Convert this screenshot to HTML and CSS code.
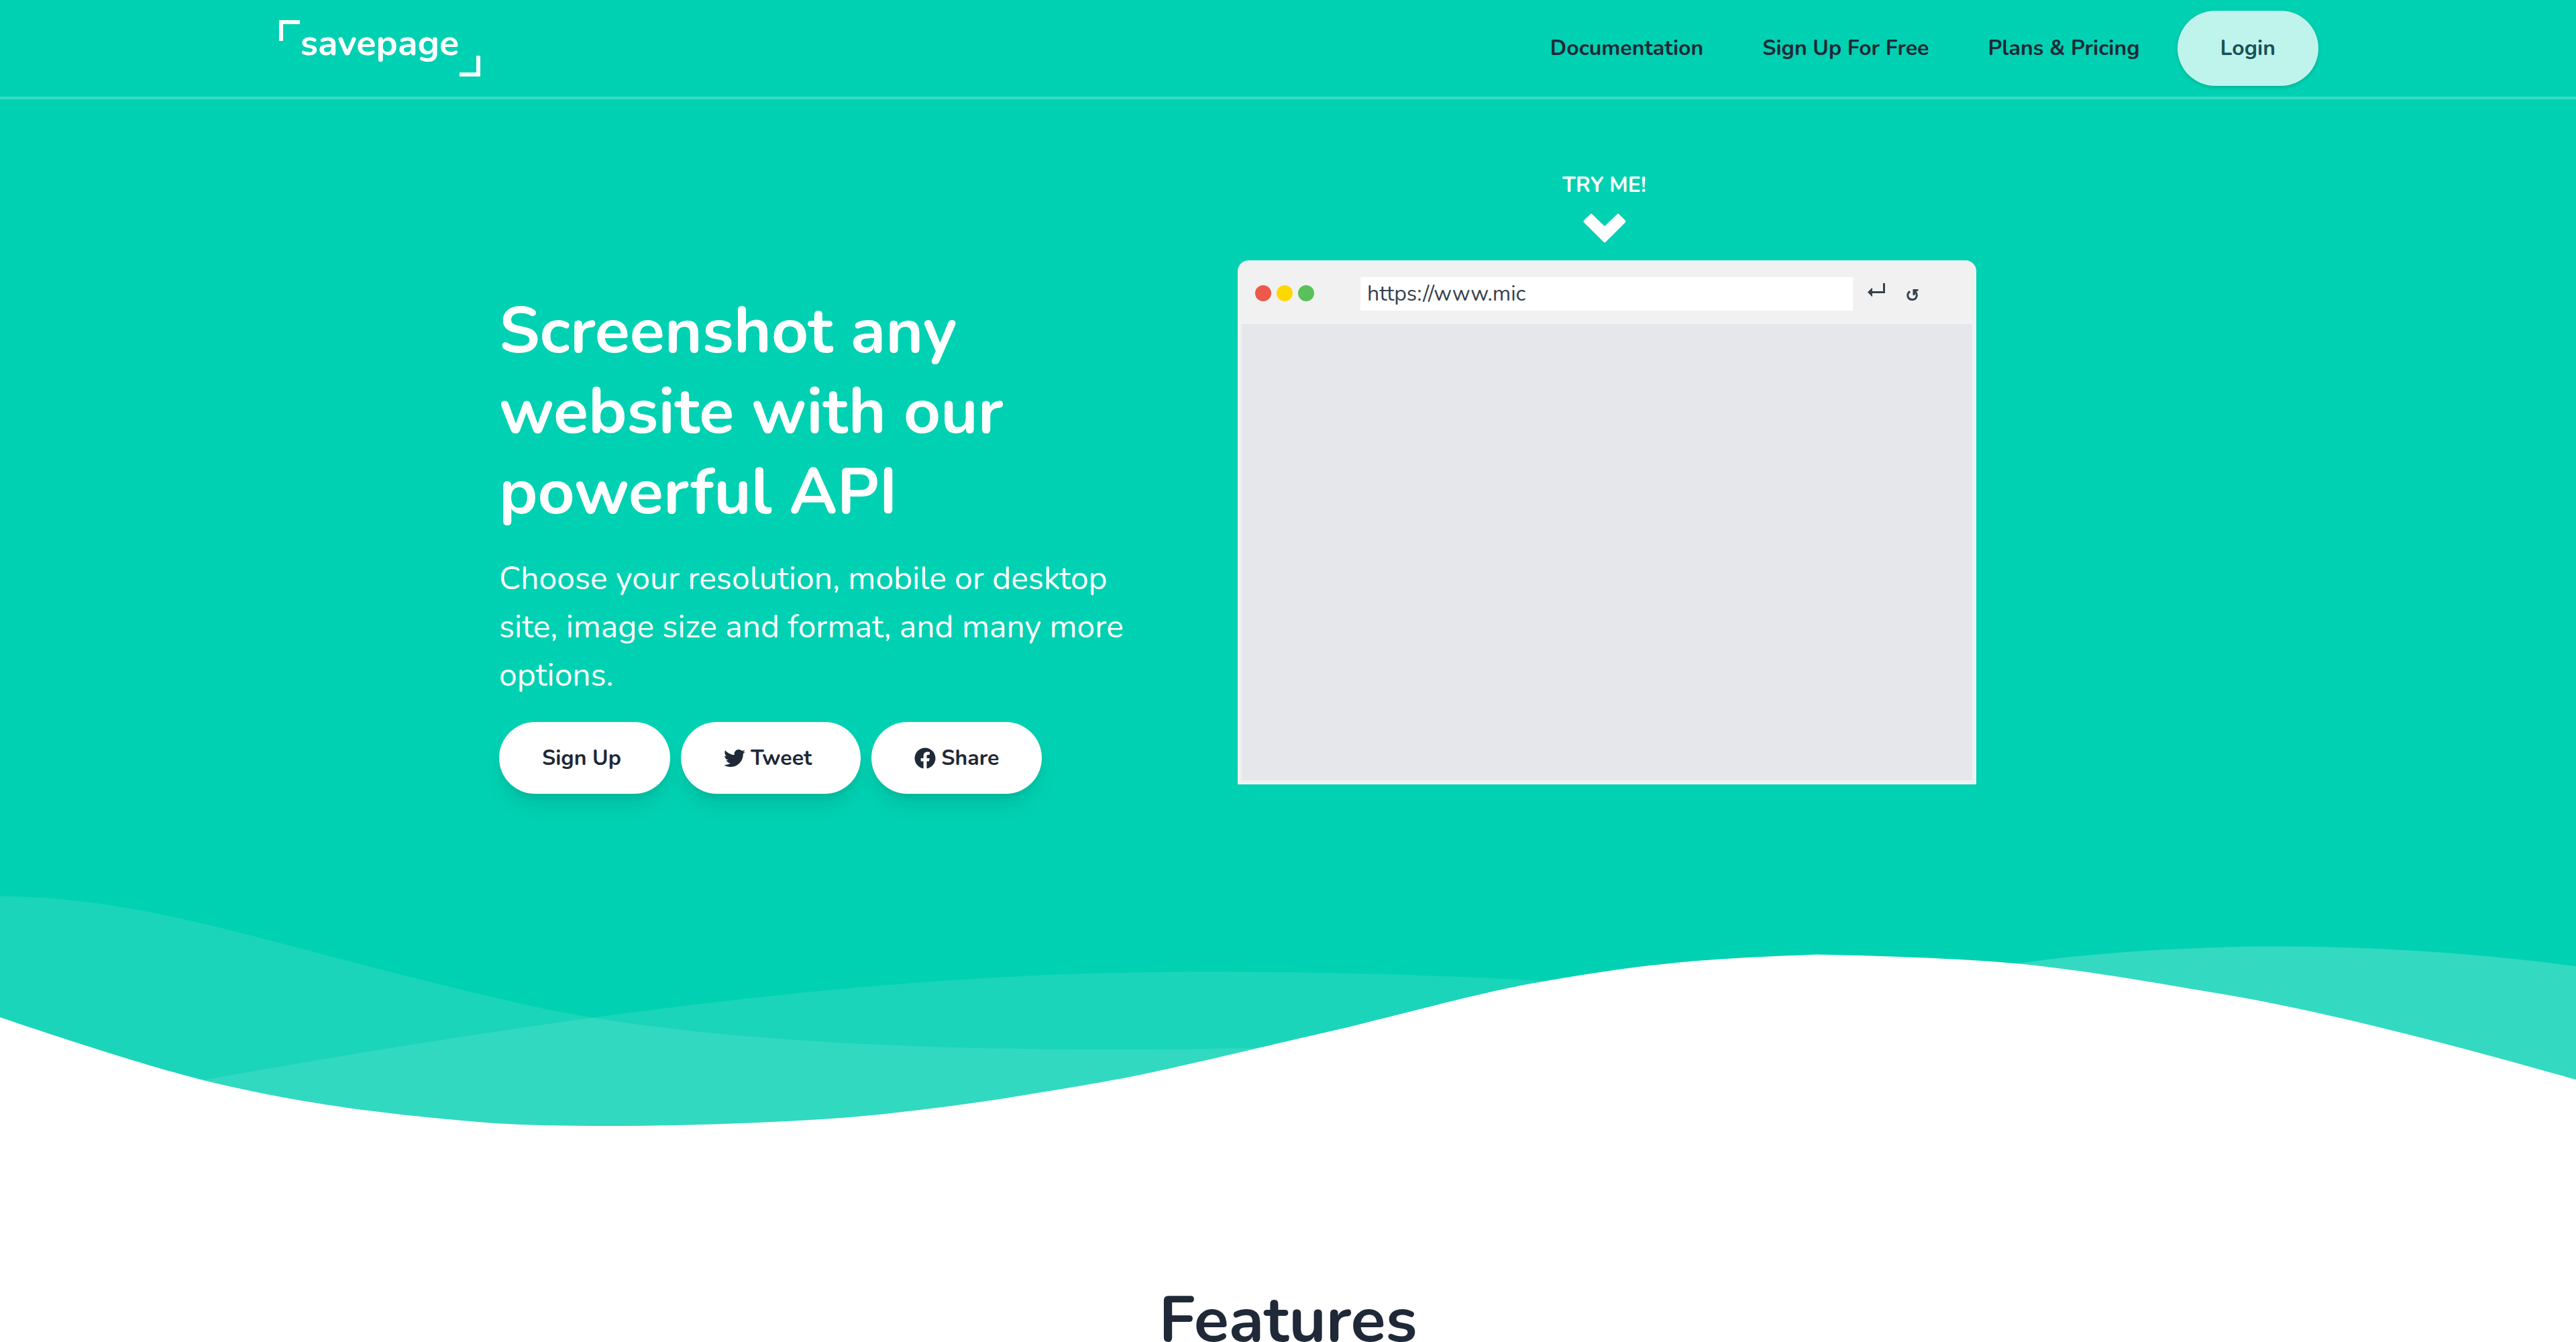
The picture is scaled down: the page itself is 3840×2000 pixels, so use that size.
FILE: index.html
```html
<!DOCTYPE html>
<html lang="en">
<head>
<meta charset="utf-8">
<title>savepage</title>
<link rel="stylesheet" href="styles.css">
</head>
<body>
<header class="site-header">
  <div class="bar">
    <a class="logo" href="#">savepage</a>
    <nav class="nav">
      <a class="nav-link" href="#">Documentation</a>
      <a class="nav-link" href="#">Sign Up For Free</a>
      <a class="nav-link" href="#">Plans &amp; Pricing</a>
      <a class="login" href="#">Login</a>
    </nav>
  </div>
</header>
<main>
  <section class="hero">
    <div class="pitch">
      <h1 class="title">Screenshot any<br>website with our<br>powerful API</h1>
      <p class="lead">Choose your resolution, mobile or desktop<br>site, image size and format, and many more<br>options.</p>
      <div class="actions">
        <button class="pill" type="button">Sign Up</button>
        <button class="pill" type="button"><svg class="icon" viewBox="0 0 512 512" aria-hidden="true"><path fill="currentColor" d="M459.37 151.716c.325 4.548.325 9.097.325 13.645 0 138.72-105.583 298.558-298.558 298.558-59.452 0-114.68-17.219-161.137-47.106 8.447.974 16.568 1.299 25.34 1.299 49.055 0 94.213-16.568 130.274-44.832-46.132-.975-84.792-31.188-98.112-72.772 6.498.974 12.995 1.624 19.818 1.624 9.421 0 18.843-1.3 27.614-3.573-48.081-9.747-84.143-51.98-84.143-102.985v-1.299c13.969 7.797 30.214 12.67 47.431 13.319-28.264-18.843-46.781-51.005-46.781-87.391 0-19.492 5.197-37.36 14.294-52.954 51.655 63.675 129.3 105.258 216.365 109.807-1.624-7.797-2.599-15.918-2.599-24.04 0-57.828 46.782-104.934 104.934-104.934 30.213 0 57.502 12.67 76.67 33.137 23.715-4.548 46.456-13.32 66.599-25.34-7.798 24.366-24.366 44.833-46.132 57.827 21.117-2.273 41.584-8.122 60.426-16.243-14.292 20.791-32.161 39.308-52.628 54.253z"/></svg>Tweet</button>
        <button class="pill pill-last" type="button"><svg class="icon" viewBox="0 0 512 512" aria-hidden="true"><path fill="currentColor" d="M504 256C504 119 393 8 256 8S8 119 8 256c0 123.78 90.69 226.38 209.25 245V327.69h-63V256h63v-54.64c0-62.15 37-96.48 93.67-96.48 27.14 0 55.52 4.84 55.52 4.84v61h-31.28c-30.8 0-40.41 19.12-40.41 38.73V256h68.78l-11 71.69h-57.78V501C413.31 482.38 504 379.78 504 256z"/></svg>Share</button>
      </div>
    </div>
    <div class="demo">
      <div class="cue">
        <p class="try">Try me!</p>
        <svg class="chevron" viewBox="0 0 64 44" aria-hidden="true"><path fill="#fff" stroke="#fff" stroke-width="4" stroke-linejoin="round" d="M12 2.6 32 22 52 2.6 61.4 12 32 41.4 2.6 12z"/></svg>
      </div>
      <div class="browser">
        <div class="toolbar">
          <span class="dot red"></span><span class="dot yellow"></span><span class="dot green"></span>
          <input class="url" type="text" aria-label="Website address" value="https://www.mic">
          <button class="tool" type="button" aria-label="Go"><svg width="26" height="30" viewBox="0 0 26 30" aria-hidden="true"><path fill="currentColor" d="M23 0h3v15H7v5.500L0 13.500 7 6.500V12h16z"/></svg></button>
          <button class="tool" type="button" aria-label="Reload"><svg width="18" height="22" viewBox="0 4 18 22" aria-hidden="true"><path fill="none" stroke="currentColor" stroke-width="3" d="M5.200 12.200C-1 16.500 2 24.500 8.500 24.500S17.500 17 12.800 12.200"/><path fill="currentColor" d="M9.500 9H17.500V11.500L13.500 12.500 12.300 18H9.500z"/></svg></button>
        </div>
        <div class="viewport"></div>
      </div>
    </div>
  </section>
  <svg class="waves" viewBox="0 0 1428 174" aria-hidden="true">
    <g transform="translate(-2 44)" fill="#fff">
      <path opacity=".1" d="M0,0 C90.7283404,0.927527913 147.912752,27.187927 291.910178,59.9119003 C387.908462,81.7278826 543.605069,89.334785 759,82.7326078 C469.336065,156.254352 216.336065,153.6679 0,74.9732496"/>
      <path opacity=".1" d="M100,104.708498 C277.413333,72.2345949 426.147877,52.5246657 546.203633,45.5787101 C666.259389,38.6327546 810.524845,41.7979068 979,55.0741668 C931.069965,56.122511 810.303266,74.8455141 616.699903,111.243176 C423.096539,147.640838 250.863238,145.462612 100,104.708498 Z"/>
      <path opacity=".2" d="M1046,51.6521276 C1130.83045,29.328812 1279.08318,17.607883 1439,40.1656806 L1439,120 C1271.17211,77.9435312 1140.17211,55.1609071 1046,51.6521276 Z"/>
    </g>
    <path transform="translate(-4 76)" fill="#fff" d="M0.457,34.035 C57.086,53.198 98.208,65.809 123.822,71.865 C181.454,85.495 234.295,90.29 272.033,93.459 C311.355,96.759 396.635,95.801 461.025,91.663 C486.76,90.01 518.727,86.372 556.926,80.752 C595.747,74.596 622.372,70.008 636.799,66.991 C663.913,61.324 712.501,49.503 727.605,46.128 C780.47,34.317 818.839,22.532 856.324,15.904 C922.689,4.169 955.676,2.522 1011.185,0.432 C1060.705,1.477 1097.39,3.129 1121.236,5.387 C1161.703,9.219 1208.621,17.821 1235.4,22.304 C1285.855,30.748 1354.351,47.432 1440.886,72.354 L1441.191,104.352 L1.121,104.031 L0.457,34.035 Z"/>
  </svg>
  <section class="features">
    <h2 class="section-title">Features</h2>
  </section>
</main>
</body>
</html>
```
FILE: styles.css
```css
*, *::before, *::after { box-sizing: border-box; }
body {
  margin: 0;
  background: #00d1b2;
  color: #1f2937;
  font-family: Nunito, Lato, sans-serif;
  font-size: 32px;
  line-height: 48px;
}
h1, h2, p { margin: 0; }
a { color: inherit; text-decoration: none; }
button, input { font: inherit; color: inherit; border: 0; padding: 0; background: none; }

.site-header { border-bottom: 4px solid #3adbc2; }
.bar {
  display: flex;
  justify-content: space-between;
  align-items: center;
  max-width: 3072px;
  height: 144px;
  margin: 0 auto;
  padding-left: 32px;
}
.logo {
  position: relative;
  width: 300px;
  height: 84px;
  color: #fff;
  font-size: 54px;
  line-height: 68px;
  font-weight: 700;
  text-align: center;
}
.logo::before, .logo::after {
  content: "";
  position: absolute;
  width: 31px;
  height: 31px;
  border: 0 solid #fff;
}
.logo::before { top: 0; left: 0; border-width: 6px 0 0 6px; }
.logo::after { right: 0; bottom: 0; border-width: 0 6px 6px 0; }
.nav { display: flex; align-items: center; gap: 88px; font-weight: 700; }
.login {
  margin-left: -32px;
  padding: 32px 64px;
  border-radius: 56px;
  background: #bff4ec;
  color: #17525a;
  box-shadow: 0 2px 6px rgba(0, 0, 0, .1), 0 2px 4px rgba(0, 0, 0, .06);
}

.hero {
  display: grid;
  grid-template-columns: 1fr 1fr;
  max-width: 2352px;
  margin: 0 auto;
  padding: 104px 150px 34px 0;
}
.pitch { padding-top: 182px; }
.title { color: #fff; font-size: 96px; line-height: 120px; font-weight: 700; }
.lead { margin-top: 32px; color: #fff; font-size: 48px; line-height: 72px; }
.actions { display: flex; gap: 16px; margin-top: 34px; }
.pill {
  display: flex;
  align-items: center;
  gap: 8px;
  height: 107px;
  padding: 0 73px 0 64px;
  border-radius: 54px;
  background: #fff;
  font-weight: 700;
  box-shadow: 0 20px 30px -6px rgba(0, 0, 0, .1), 0 8px 12px -4px rgba(0, 0, 0, .05);
}
.pill-last { padding-right: 64px; }
.icon { width: 32px; height: 32px; }

.cue {
  display: flex;
  flex-direction: column;
  align-items: center;
  gap: 18px;
  padding: 0 8px 26px 0;
}
.try { color: #fff; font-weight: 700; text-transform: uppercase; }
.chevron { width: 64px; height: 44px; }
.browser {
  border: 6px solid #f1f1f1;
  border-top: 0;
  border-radius: 16px 16px 0 0;
  background: #f1f1f1;
}
.toolbar { display: flex; align-items: center; gap: 8px; height: 95px; padding: 2px 66px 0 20px; }
.dot { width: 24px; height: 24px; border-radius: 50%; }
.red { background: #ed594a; }
.yellow { background: #fdd800; }
.green { background: #5ac05a; }
.url {
  flex: 1;
  height: 50px;
  margin: 2px 4px 0 61px;
  padding: 0 10px;
  background: #fff;
  color: #374151;
}
.tool { display: flex; justify-content: center; width: 46px; color: #374151; }
.viewport { height: 680px; background: #e5e7eb; }

.waves { display: block; width: 100%; }
.features { padding-top: 223px; background: #fff; }
.section-title { font-size: 96px; line-height: 120px; font-weight: 700; text-align: center; }
```
